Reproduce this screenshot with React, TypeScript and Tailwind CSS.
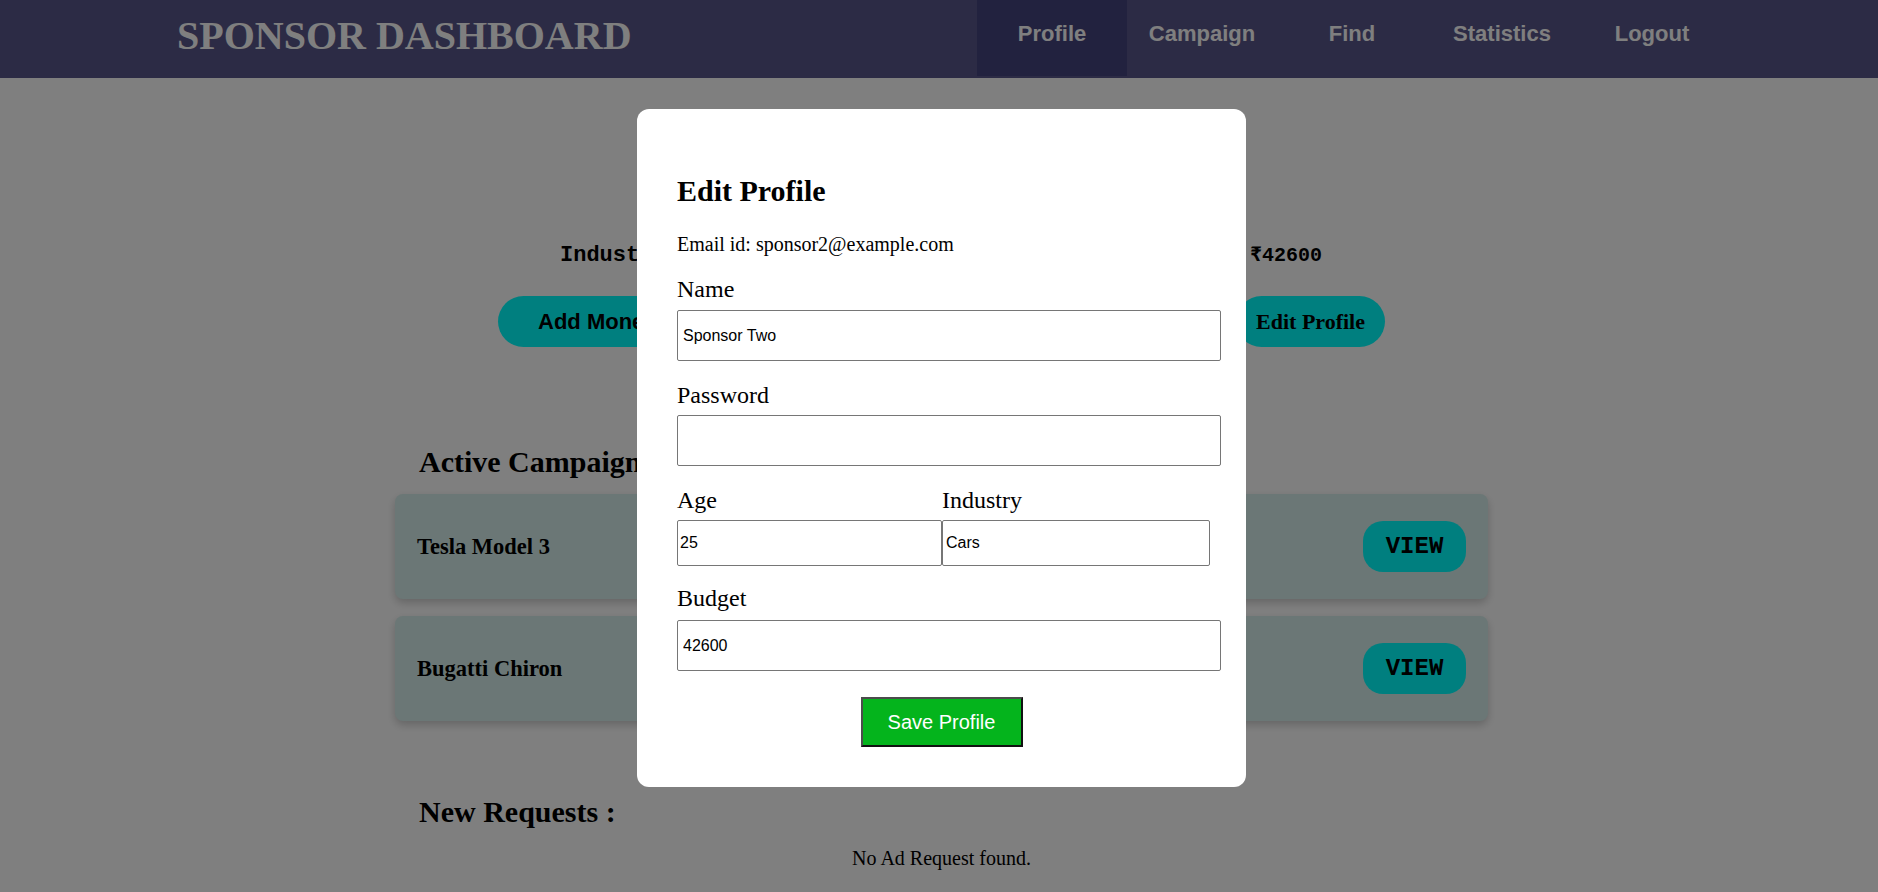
const serif = "font-['Liberation_Serif','Times_New_Roman',serif]";
const sans = "font-['Liberation_Sans',Arial,sans-serif]";
const mono = "font-['Liberation_Mono','Courier_New',monospace]";

const navItems = ["Profile", "Campaign", "Find", "Statistics", "Logout"];

const campaigns = ["Tesla Model 3", "Bugatti Chiron"];

function Navbar() {
  return (
    <nav className="flex h-[78px] items-stretch justify-between bg-[#58568a] pl-[177px] pr-[151px]">
      <h1 className={`${serif} mt-[13px] text-[40px] font-bold leading-[46px] text-white`}>
        SPONSOR DASHBOARD
      </h1>
      <ul className="flex">
        {navItems.map((item, i) => (
          <li
            key={item}
            className={[
              sans,
              "flex w-[150px] justify-center pt-[21px] text-[22px] font-bold leading-[26px] text-white",
              i === 0 ? "mb-[2px] bg-[#44447e]" : "",
            ].join(" ")}
          >
            {item}
          </li>
        ))}
      </ul>
    </nav>
  );
}

function Field({ label, value }: { label: string; value: string }) {
  return (
    <>
      <label className={`${serif} mt-[19px] block text-[24px] leading-[28px] text-black`}>{label}</label>
      <input
        readOnly
        value={value}
        className={`${sans} mt-[7px] block h-[51px] w-[544px] rounded-[2px] border border-[#767676] bg-white pl-[5px] text-[16px] text-black outline-none`}
      />
    </>
  );
}

function EditProfileModal() {
  return (
    <div className="fixed inset-0 bg-black/50">
      <div className="ml-[637px] mt-[109px] w-[609px] rounded-[12px] bg-white px-[40px] pb-[40px] pt-[64px]">
        <h2 className={`${serif} text-[30px] font-bold leading-[35px] text-black`}>Edit Profile</h2>
        <p className={`${serif} mt-[25px] text-[20px] leading-[23px] text-black`}>
          Email id: sponsor2@example.com
        </p>
        <Field label="Name" value="Sponsor Two" />
        <label className={`${serif} mt-[20px] block text-[24px] leading-[28px] text-black`}>Password</label>
        <input
          readOnly
          type="password"
          value=""
          className="mt-[6px] block h-[51px] w-[544px] rounded-[2px] border border-[#767676] bg-white outline-none"
        />
        <div className="mt-[20px] flex">
          <div className="w-[265px]">
            <label className={`${serif} block text-[24px] leading-[28px] text-black`}>Age</label>
            <input
              readOnly
              value="25"
              className={`${sans} mt-[6px] block h-[46px] w-[265px] rounded-[2px] border border-[#767676] bg-white px-[2px] text-[16px] text-black outline-none`}
            />
          </div>
          <div className="w-[268px]">
            <label className={`${serif} block text-[24px] leading-[28px] text-black`}>Industry</label>
            <input
              readOnly
              value="Cars"
              className={`${sans} mt-[6px] block h-[46px] w-[268px] rounded-[2px] border border-[#767676] bg-white px-[3px] text-[16px] text-black outline-none`}
            />
          </div>
        </div>
        <label className={`${serif} mt-[18px] block text-[24px] leading-[28px] text-black`}>Budget</label>
        <input
          readOnly
          value="42600"
          className={`${sans} mt-[8px] block h-[51px] w-[544px] rounded-[2px] border border-[#767676] bg-white pl-[5px] text-[16px] text-black outline-none`}
        />
        <div className="mt-[26px] flex justify-center">
          <button
            className={`${sans} h-[50px] w-[162px] border-2 border-b-[#111] border-l-[#4c4c4c] border-r-[#111] border-t-[#4c4c4c] bg-[#04b41c] text-[20px] text-white`}
          >
            Save Profile
          </button>
        </div>
      </div>
    </div>
  );
}

export default function App() {
  return (
    <div className="relative min-h-[892px] overflow-hidden bg-white">
      <Navbar />

      <main className="ml-[395px] w-[1093px]">
        <div className={`${mono} ml-[165px] mt-[165px] flex w-[762px] items-baseline justify-between font-bold leading-[26px] text-black`}>
          <span className="text-[22px]">Industry: Cars</span>
          <span className="text-[20px]">Budget: ₹42600</span>
        </div>

        <div className="ml-[103px] mt-[27px] flex w-[887px] justify-between">
          <button className={`${sans} h-[51px] rounded-full bg-[#00ffff] px-[40px] text-[22px] font-bold text-black`}>
            Add Money
          </button>
          <button className={`${serif} h-[51px] rounded-full bg-[#00ffff] px-[20px] text-[22px] font-bold text-black`}>
            Edit Profile
          </button>
        </div>

        <h2 className={`${serif} ml-[24px] mt-[98px] text-[30px] font-bold leading-[34px] text-black`}>
          Active Campaigns
        </h2>
        <div className="mt-[15px] flex flex-col gap-[17px]">
          {campaigns.map((c) => (
            <div
              key={c}
              className="flex h-[105px] items-center justify-between rounded-[8px] bg-[#d6eeec] px-[22px] shadow-[0_4px_8px_rgba(0,0,0,0.2)]"
            >
              <h3 className={`${serif} text-[22.5px] font-bold text-black`}>{c}</h3>
              <button className={`${mono} h-[51px] w-[103px] rounded-[20px] bg-[#00ffff] text-[24px] font-bold text-black`}>
                VIEW
              </button>
            </div>
          ))}
        </div>

        <h2 className={`${serif} ml-[24px] mt-[74px] text-[30px] font-bold leading-[34px] text-black`}>
          New Requests :
        </h2>
        <p className={`${serif} mt-[18px] text-center text-[20px] leading-[23px] text-black`}>
          No Ad Request found.
        </p>
      </main>

      <EditProfileModal />
    </div>
  );
}
